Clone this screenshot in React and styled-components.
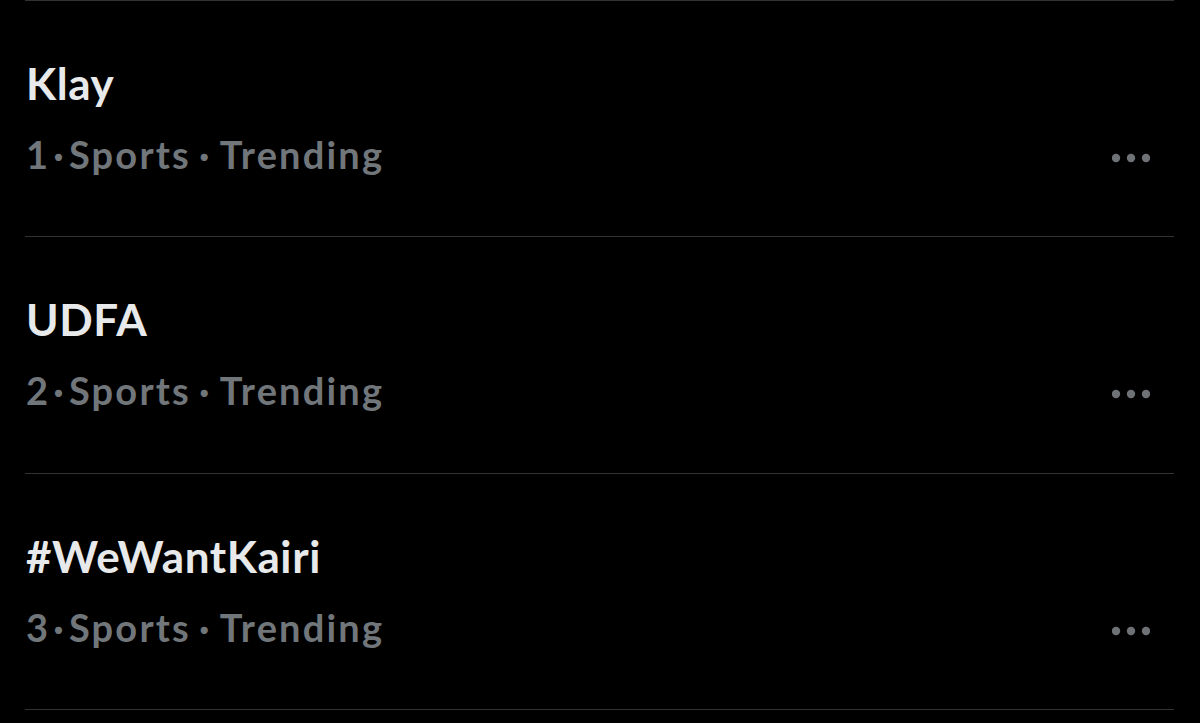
import React from "react";
import styled, { createGlobalStyle } from "styled-components";

const Global = createGlobalStyle`
  html, body { margin: 0; padding: 0; background: #000; }
  body { font-family: Lato, "Noto Sans", sans-serif; -webkit-font-smoothing: antialiased; }
`;

const Page = styled.div`
  width: 1200px;
  height: 723px;
  background: #000;
  overflow: hidden;
`;

const List = styled.div`
  margin: 0 26px 0 25px;
  border-top: 1px solid #2f3336;
`;

const Row = styled.div`
  box-sizing: border-box;
  height: 236.3px;
  border-bottom: 1px solid #2f3336;
  display: flex;
  flex-direction: column;
  padding-top: 56px;
`;

const Title = styled.div`
  font-size: 44px;
  line-height: 52px;
  font-weight: 700;
  letter-spacing: 0.6px;
  color: #e7e9ea;
  padding-left: 1px;
`;

const MetaLine = styled.div`
  margin-top: 23px;
  display: flex;
  align-items: center;
  justify-content: space-between;
  padding-right: 24px;
`;

const Meta = styled.div`
  font-size: 38px;
  line-height: 44px;
  font-weight: 700;
  letter-spacing: 2.2px;
  color: #71767b;
  padding-left: 1px;
`;

const Dot = styled.span`
  margin: 0 ${(p) => p.$gap}px;
`;

const More = styled.svg`
  width: 38px;
  height: 10px;
  display: block;
  margin-top: 8px;
`;

const trends = [
  { rank: 1, name: "Klay" },
  { rank: 2, name: "UDFA" },
  { rank: 3, name: "#WeWantKairi" },
];

export default function App() {
  return (
    <Page>
      <Global />
      <List>
        {trends.map((t) => (
          <Row key={t.rank}>
            <Title>{t.name}</Title>
            <MetaLine>
              <Meta>
                {t.rank}
                <Dot $gap={3}>·</Dot>Sports<Dot $gap={8}>·</Dot>Trending
              </Meta>
              <More viewBox="0 0 38 10" aria-label="More">
                <circle cx="4" cy="5" r="4.2" fill="#6e7276" />
                <circle cx="19" cy="5" r="4.2" fill="#6e7276" />
                <circle cx="34" cy="5" r="4.2" fill="#6e7276" />
              </More>
            </MetaLine>
          </Row>
        ))}
      </List>
    </Page>
  );
}
